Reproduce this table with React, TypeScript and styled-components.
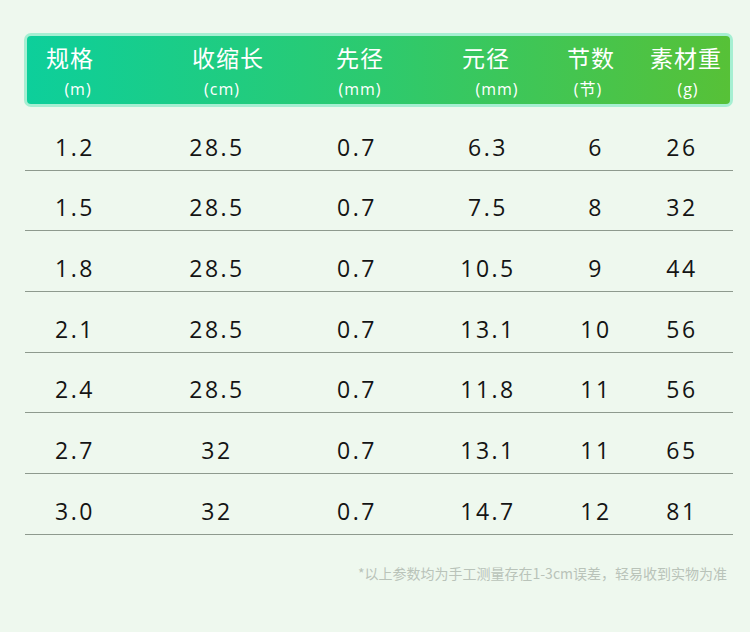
import React from "react"
import styled, { createGlobalStyle } from "styled-components"

const GlobalStyle = createGlobalStyle`
    body {
        margin: 0;
        background: #eef8ee;
        font-family: "Open Sans", "Noto Sans CJK SC", sans-serif;
    }
`

// column widths in px, measured from the row lines' left edge
const widths = [100, 184, 96, 166, 50, 112]

const columns = [
    { title: "规格", unit: "(m)", titleDx: -6, unitDx: 2, dataDx: 0 },
    { title: "收缩长", unit: "(cm)", titleDx: 11, unitDx: 5, dataDx: 0 },
    { title: "先径", unit: "(mm)", titleDx: 3, unitDx: 3, dataDx: 0 },
    { title: "元径", unit: "(mm)", titleDx: -2, unitDx: 9, dataDx: 0 },
    { title: "节数", unit: "(节)", titleDx: -5, unitDx: -8, dataDx: 0 },
    { title: "素材重", unit: "(g)", titleDx: 9, unitDx: 11, dataDx: 5 },
]

const rows = [
    ["1.2", "28.5", "0.7", "6.3", "6", "26"],
    ["1.5", "28.5", "0.7", "7.5", "8", "32"],
    ["1.8", "28.5", "0.7", "10.5", "9", "44"],
    ["2.1", "28.5", "0.7", "13.1", "10", "56"],
    ["2.4", "28.5", "0.7", "11.8", "11", "56"],
    ["2.7", "32", "0.7", "13.1", "11", "65"],
    ["3.0", "32", "0.7", "14.7", "12", "81"],
]

// shift centred content sideways by padding one side
const shift = (dx: number) =>
    dx >= 0 ? `padding-left: ${dx * 2}px;` : `padding-right: ${-dx * 2}px;`

const Page = styled.div`
    padding: 33px 17px 40px 24px;
`

const HeaderBar = styled.div`
    box-sizing: border-box;
    width: 709px;
    height: 74px;
    border: 3px solid #a6efd2;
    border-radius: 7px;
    background: linear-gradient(90deg, #0dcf9b 0%, #2dca6e 50%, #57c137 100%);
    display: grid;
    grid-template-columns: ${widths[0] - 2}px ${widths.slice(1).map(w => w + "px").join(" ")};
    color: #ffffff;
`

const HeadCell = styled.div`
    display: flex;
    flex-direction: column;
    padding-top: 7px;
`

const Title = styled.div<{ $dx: number }>`
    display: flex;
    justify-content: center;
    white-space: nowrap;
    font-family: "Noto Sans CJK SC", sans-serif;
    font-size: 23px;
    line-height: 28px;
    letter-spacing: 1px;
    ${p => shift(p.$dx)}
`

const Unit = styled.div<{ $dx: number }>`
    display: flex;
    justify-content: center;
    white-space: nowrap;
    margin-top: 8px;
    font-family: "Open Sans", "Noto Sans CJK SC", sans-serif;
    font-size: 16px;
    line-height: 20px;
    letter-spacing: 1px;
    ${p => shift(p.$dx)}
`

const Table = styled.div`
    width: 708px;
    margin-left: 1px;
    padding-top: 3px;
`

const Row = styled.div`
    box-sizing: border-box;
    height: 60.67px;
    display: grid;
    grid-template-columns: ${widths.map(w => w + "px").join(" ")};
    align-items: end;
    padding-bottom: 8px;
    border-bottom: 1px solid #8e9a8e;
`

const Cell = styled.div<{ $dx: number }>`
    display: flex;
    justify-content: center;
    white-space: nowrap;
    font-size: 23px;
    line-height: 30px;
    letter-spacing: 2.5px;
    color: #141414;
    ${p => shift(p.$dx)}
`

const Note = styled.div`
    margin-top: 28px;
    padding-right: 6px;
    text-align: right;
    font-family: "Noto Sans CJK SC", sans-serif;
    font-size: 14px;
    line-height: 20px;
    color: #b9c3b9;
`

export default function App() {
    return (
        <Page>
            <GlobalStyle />
            <HeaderBar>
                {columns.map(c => (
                    <HeadCell key={c.title}>
                        <Title $dx={c.titleDx}>{c.title}</Title>
                        <Unit $dx={c.unitDx}>{c.unit}</Unit>
                    </HeadCell>
                ))}
            </HeaderBar>
            <Table>
                {rows.map((r, i) => (
                    <Row key={i}>
                        {r.map((v, j) => (
                            <Cell key={j} $dx={columns[j].dataDx}>{v}</Cell>
                        ))}
                    </Row>
                ))}
            </Table>
            <Note>*以上参数均为手工测量存在1-3cm误差，轻易收到实物为准</Note>
        </Page>
    )
}
